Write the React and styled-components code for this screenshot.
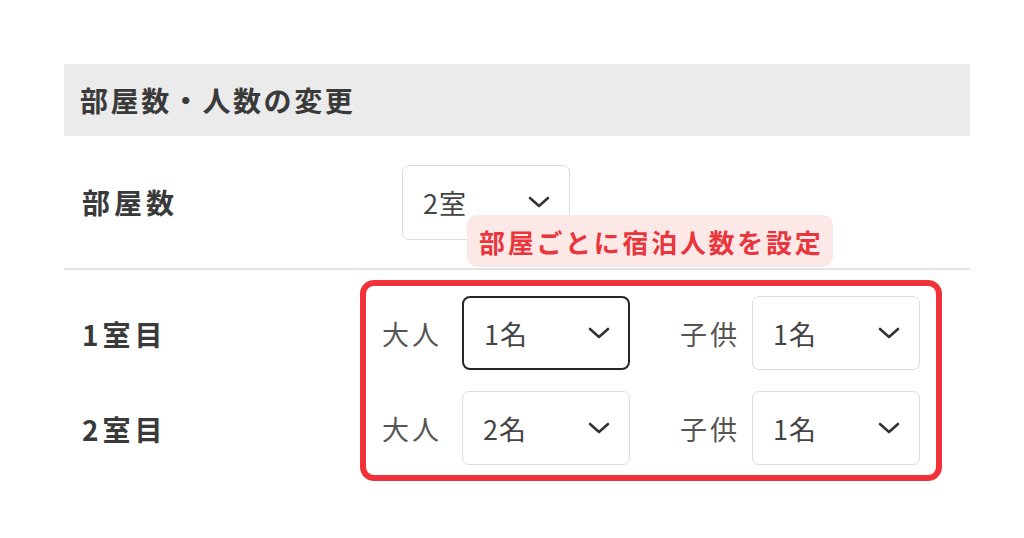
import React from 'react'
import styled, { createGlobalStyle } from 'styled-components'

const Global = createGlobalStyle`
  body {
    margin: 0;
    background: #ffffff;
    font-family: "Noto Sans CJK JP", "Noto Sans", sans-serif;
    color: #333333;
  }
`;

const Page = styled.div`
  width: 1024px;
  height: 538px;
  padding: 64px 54px 0 64px;
  box-sizing: border-box;
`;

const Header = styled.div`
  height: 72px;
  background: #ebebeb;
  display: flex;
  align-items: center;
  padding-left: 16px;
  font-size: 28px;
  font-weight: 700;
  letter-spacing: 2.6px;
  color: #3a3a3a;
`;

const CountRow = styled.div`
  position: relative;
  height: 134px;
  display: flex;
  align-items: center;
  border-bottom: 2px solid #e4e4e4;
  box-sizing: border-box;
`;

const RowLabel = styled.div`
  width: ${p => p.$w}px;
  padding-left: 18px;
  box-sizing: border-box;
  font-size: 28px;
  font-weight: 700;
  letter-spacing: 4px;
  color: #3a3a3a;
  height: ${p => p.$h || 'auto'};
  display: flex;
  align-items: center;
`;

const Select = styled.div`
  width: 168px;
  height: ${p => p.$h || 74}px;
  box-sizing: border-box;
  border: ${p => (p.$focus ? '2px solid #262626' : '1px solid #dcdcdc')};
  border-radius: ${p => (p.$focus ? 8 : 7)}px;
  display: flex;
  align-items: center;
  justify-content: space-between;
  padding: 0 ${p => (p.$focus ? 17 : 18)}px 0 ${p => (p.$focus ? 20 : 20)}px;
  background: #fff;
  font-size: 27px;
  color: #444;
  letter-spacing: 1px;
`;

const Tip = styled.div`
  position: absolute;
  left: 403px;
  top: 79px;
  width: 366px;
  height: 52px;
  box-sizing: border-box;
  padding-left: 12px;
  display: flex;
  align-items: center;
  background: #fde8e8;
  border-radius: 10px;
  color: #e8363c;
  font-size: 26px;
  font-weight: 700;
  letter-spacing: 2.7px;
  white-space: nowrap;
`;

const RoomSection = styled.div`
  display: flex;
  margin-top: 10px;
`;

const LabelCol = styled.div`
  width: 296px;
  padding-top: 17px;
  display: flex;
  flex-direction: column;
  gap: 21px;
`;

const RedBox = styled.div`
  width: 582px;
  height: 201px;
  box-sizing: border-box;
  border: 6px solid #f2323a;
  border-radius: 14px;
  padding: 10px 16px 0 16px;
  display: flex;
  flex-direction: column;
  gap: 21px;
`;

const RoomRow = styled.div`
  display: flex;
  align-items: center;
  gap: 50px;
`;

const Field = styled.div`
  display: flex;
  align-items: center;
  gap: ${p => p.$gap}px;
`;

const FieldLabel = styled.span`
  width: 58px;
  font-size: 27px;
  color: #555;
  letter-spacing: 3px;
  white-space: nowrap;
`;

const Chevron = () => (
  <svg width="24" height="14" viewBox="0 0 24 14" fill="none">
    <path d="M3 3 L12 11 L21 3" stroke="#333" strokeWidth="2.6" strokeLinecap="round" strokeLinejoin="round" />
  </svg>
)

const Dropdown = ({ value, focus, h }) => (
  <Select $focus={focus} $h={h}>
    <span>{value}</span>
    <Chevron />
  </Select>
)

const rooms = [
  { name: '1室目', adult: '1名', child: '1名', focus: true },
  { name: '2室目', adult: '2名', child: '1名' },
]

export default function App() {
  return (
    <Page>
      <Global />
      <Header>部屋数・人数の変更</Header>
      <CountRow>
        <RowLabel $w={338}>部屋数</RowLabel>
        <Dropdown value="2室" h={75} />
        <Tip>部屋ごとに宿泊人数を設定</Tip>
      </CountRow>
      <RoomSection>
        <LabelCol>
          {rooms.map(r => (
            <RowLabel key={r.name} $w={296} $h="74px">{r.name}</RowLabel>
          ))}
        </LabelCol>
        <RedBox>
          {rooms.map(r => (
            <RoomRow key={r.name}>
              <Field $gap={22}>
                <FieldLabel>大人</FieldLabel>
                <Dropdown value={r.adult} focus={r.focus} />
              </Field>
              <Field $gap={14}>
                <FieldLabel>子供</FieldLabel>
                <Dropdown value={r.child} />
              </Field>
            </RoomRow>
          ))}
        </RedBox>
      </RoomSection>
    </Page>
  )
}
